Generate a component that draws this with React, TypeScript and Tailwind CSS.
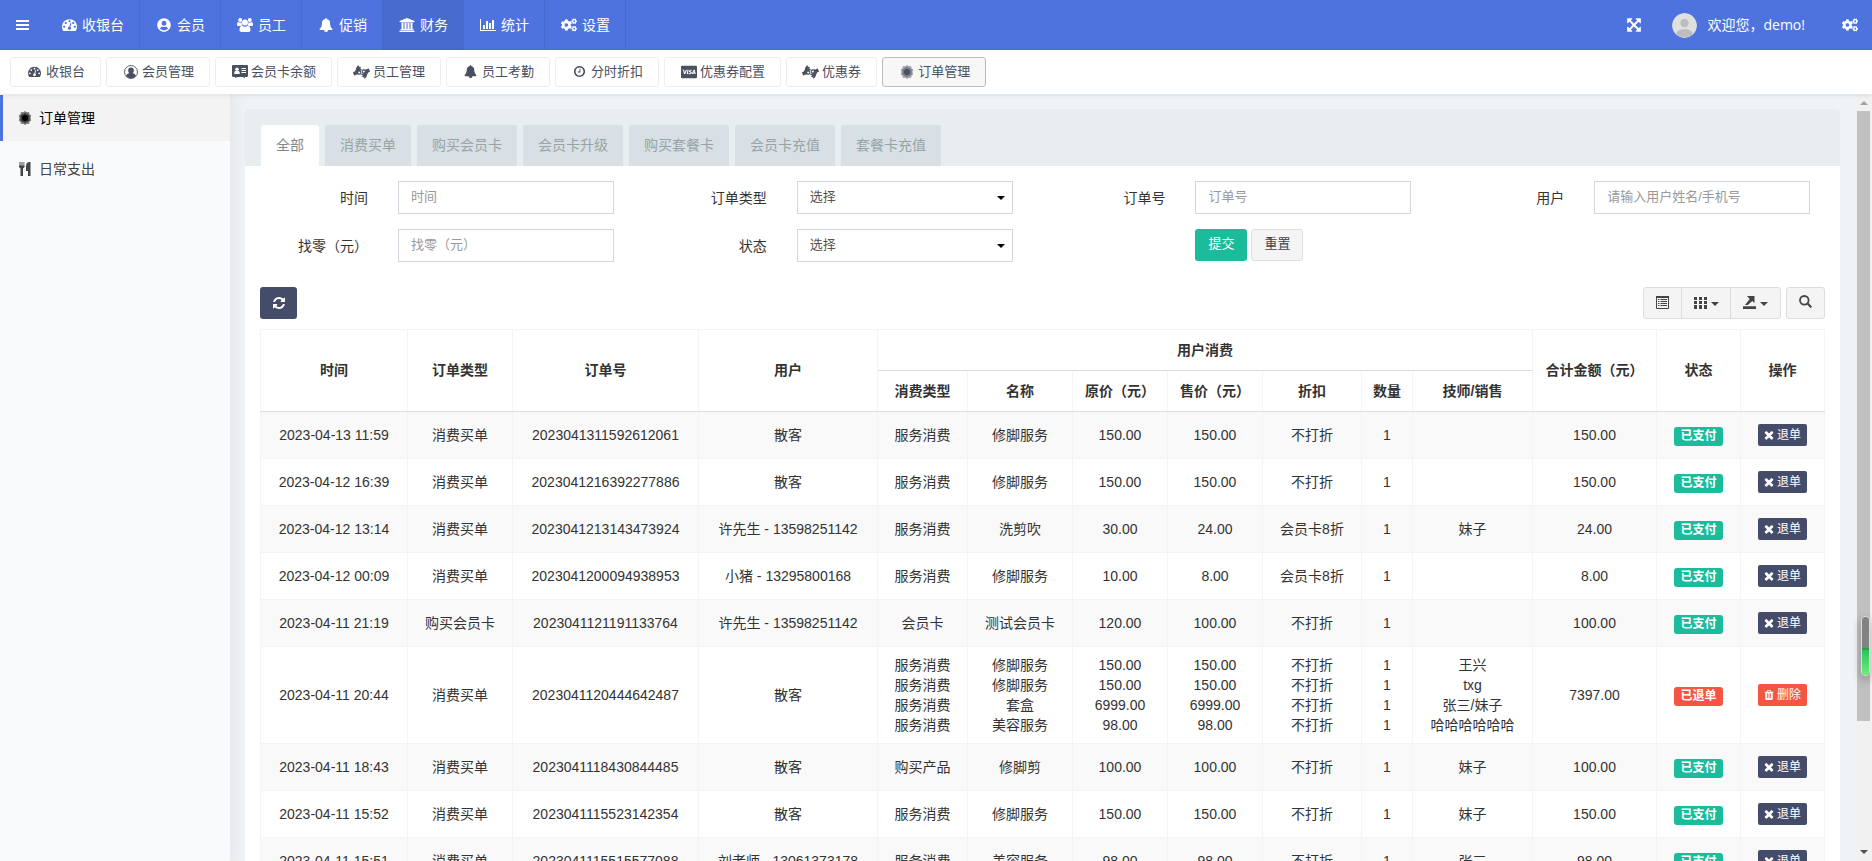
import type { ReactNode } from "react";
import { FaAmericanSignLanguageInterpreting, FaCogs, FaUserCircle, FaCcVisa } from "react-icons/fa";

type TIcon = { className?: string };

const Glyph = ({ d, box = "0 0 1792 1792", className = "h-[1em] w-[1em]" }: TIcon & { d: string; box?: string }) => (
  <svg viewBox={box} fill="currentColor" className={className} aria-hidden="true">
    <path d={d} />
  </svg>
);

const PATHS = {
  dashboard:
    "M384 1152q0-53-37.5-90.5t-90.5-37.5-90.5 37.5-37.5 90.5 37.5 90.5 90.5 37.5 90.5-37.5 37.5-90.5zm192-448q0-53-37.5-90.5t-90.5-37.5-90.5 37.5-37.5 90.5 37.5 90.5 90.5 37.5 90.5-37.5 37.5-90.5zm428 481l101-382q6-26-7.5-48.5t-38.5-29.5-48 6.5-30 39.5l-101 382q-60 5-107 43.5t-63 98.5q-20 77 20 146t117 89 146-20 89-117q16-60-6-117t-72-91zm660-33q0-53-37.5-90.5t-90.5-37.5-90.5 37.5-37.5 90.5 37.5 90.5 90.5 37.5 90.5-37.5 37.5-90.5zm-640-640q0-53-37.5-90.5t-90.5-37.5-90.5 37.5-37.5 90.5 37.5 90.5 90.5 37.5 90.5-37.5 37.5-90.5zm448 192q0-53-37.5-90.5t-90.5-37.5-90.5 37.5-37.5 90.5 37.5 90.5 90.5 37.5 90.5-37.5 37.5-90.5zm320 448q0 261-141 483-19 29-54 29h-1402q-35 0-54-29-141-221-141-483 0-182 71-348t191-286 286-191 348-71 348 71 286 191 191 286 71 348z",
  bell: "M912 1696q0-16-16-16-59 0-101.5-42.5t-42.5-101.5q0-16-16-16t-16 16q0 73 51.5 124.5t124.5 51.5q16 0 16-16zm816-288q0 52-38 90t-90 38h-448q0 106-75 181t-181 75-181-75-75-181h-448q-52 0-90-38t-38-90q50-42 91-88t85-119.5 74.5-158.5 50-206 19.5-260q0-152 117-282.5t307-158.5q-8-19-8-39 0-40 28-68t68-28 68 28 28 68q0 20-8 39 190 28 307 158.5t117 282.5q0 139 19.5 260t50 206 74.5 158.5 85 119.5 91 88z",
  bank: "M960 0l960 384v128h-128q0 26-20.5 45t-48.5 19h-1526q-28 0-48.5-19t-20.5-45h-128v-128zm-704 640h256v768h128v-768h256v768h128v-768h256v768h128v-768h256v768h59q28 0 48.5 19t20.5 45v64h-1664v-64q0-26 20.5-45t48.5-19h59v-768zm1595 960q28 0 48.5 19t20.5 45v128h-1920v-128q0-26 20.5-45t48.5-19h1782z",
  refresh:
    "M1639 1056q0 5-1 7-64 268-268 434.5t-478 166.5q-146 0-282.5-55t-243.5-157l-129 129q-19 19-45 19t-45-19-19-45v-448q0-26 19-45t45-19h448q26 0 45 19t19 45-19 45l-137 137q71 66 161 102t187 36q134 0 250-65t186-179q11-17 53-117 8-23 30-23h192q13 0 22.5 9.5t9.5 22.5zm25-800v448q0 26-19 45t-45 19h-448q-26 0-45-19t-19-45 19-45l138-138q-148-137-349-137-134 0-250 65t-186 179q-11 17-53 117-8 23-30 23h-199q-13 0-22.5-9.5t-9.5-22.5v-7q65-268 270-434.5t480-166.5q146 0 284 55.5t245 156.5l130-129q19-19 45-19t45 19 19 45z",
  times:
    "M1490 1322q0 40-28 68l-136 136q-28 28-68 28t-68-28l-294-294-294 294q-28 28-68 28t-68-28l-136-136q-28-28-28-68t28-68l294-294-294-294q-28-28-28-68t28-68l136-136q28-28 68-28t68 28l294 294 294-294q28-28 68-28t68 28l136 136q28 28 28 68t-28 68l-294 294 294 294q28 28 28 68z",
  chart:
    "M640 896v512h-256v-512h256zm384-512v1024h-256v-1024h256zm1024 1152v128h-2048v-1536h128v1408h1920zm-640-896v768h-256v-768h256zm384-384v1152h-256v-1152h256z",
  clock:
    "M1024 544v448q0 14-9 23t-23 9h-320q-14 0-23-9t-9-23v-64q0-14 9-23t23-9h224v-352q0-14 9-23t23-9h64q14 0 23 9t9 23zm416 352q0-148-73-273t-198-198-273-73-273 73-198 198-73 273 73 273 198 198 273 73 273-73 198-198 73-273zm224 0q0 209-103 385.5t-279.5 279.5-385.5 103-385.5-103-279.5-279.5-103-385.5 103-385.5 279.5-279.5 385.5-103 385.5 103 279.5 279.5 103 385.5z",
  trash:
    "M704 1376v-704q0-14-9-23t-23-9h-64q-14 0-23 9t-9 23v704q0 14 9 23t23 9h64q14 0 23-9t9-23zm256 0v-704q0-14-9-23t-23-9h-64q-14 0-23 9t-9 23v704q0 14 9 23t23 9h64q14 0 23-9t9-23zm256 0v-704q0-14-9-23t-23-9h-64q-14 0-23 9t-9 23v704q0 14 9 23t23 9h64q14 0 23-9t9-23zm-544-992h448l-48-117q-7-9-17-11h-317q-10 2-17 11zm928 32v64q0 14-9 23t-23 9h-96v948q0 83-47 143.5t-113 60.5h-832q-66 0-113-58.5t-47-141.5v-952h-96q-14 0-23-9t-9-23v-64q0-14 9-23t23-9h309l70-167q15-37 54-63t79-26h320q40 0 79 26t54 63l70 167h309q14 0 23 9t9 23z",
  expand:
    "M1411 541l-355 355 355 355 144-144q29-31 70-14 39 17 39 59v448q0 26-19 45t-45 19h-448q-42 0-59-40-17-39 14-69l144-144-355-355-355 355 144 144q31 30 14 69-17 40-59 40h-448q-26 0-45-19t-19-45v-448q0-42 40-59 39-17 69 14l144 144 355-355-355-355-144 144q-19 19-45 19-12 0-24-5-40-17-40-59v-448q0-26 19-45t45-19h448q42 0 59 40 17 39-14 69l-144 144 355 355 355-355-144-144q-31-30-14-69 17-40 59-40h448q26 0 45 19t19 45v448q0 42-39 59-13 5-25 5-26 0-45-19z",
};

const Group = () => (
  <svg viewBox="0 0 16 14" className="h-[14px] w-4" fill="currentColor" aria-hidden="true">
    <circle cx="3.200" cy="2" r="2" />
    <circle cx="12.800" cy="2" r="2" />
    <circle cx="8" cy="4.500" r="3" />
    <path d="M1 4c1.300.8 2.600.8 3.600.3 0 1.300.3 2.300 1 3.100-.9 0-1.600.2-2.100.6H1.400C.5 8 0 7.600 0 6.700 0 5.400.3 4.300 1 4zM15 4c-1.300.8-2.600.8-3.600.3 0 1.300-.3 2.300-1 3.100.9 0 1.600.2 2.100.6h2.100c.9 0 1.400-.4 1.400-1.300 0-1.300-.3-2.400-1-2.700zM5.200 7.700c1.800 1.300 3.800 1.300 5.600 0 1.900 0 2.700 2.200 2.700 4.300 0 1.300-.8 2-2 2h-7c-1.200 0-2-.7-2-2 0-2.100.8-4.300 2.700-4.300z" />
  </svg>
);

const UserRing = () => (
  <svg viewBox="0 0 16 16" className="h-[14px] w-[14px]" aria-hidden="true">
    <circle cx="8" cy="8" r="7.400" fill="none" stroke="currentColor" strokeWidth="1" />
    <path fill="currentColor" d="M8 2.800a3.200 3.200 0 0 1 3.200 3.400c0 1.500-.7 2.800-1.500 3.300 2 .3 3.500 1.300 3.900 3A7.300 7.300 0 0 1 8 15.300a7.300 7.300 0 0 1-5.600-2.800c.4-1.700 1.900-2.700 3.900-3-.8-.5-1.500-1.800-1.500-3.300A3.200 3.200 0 0 1 8 2.800z" />
  </svg>
);

const Vcard = () => (
  <svg viewBox="0 0 16 13" className="h-[13px] w-4" aria-hidden="true">
    <path fill="currentColor" d="M1.200 0h13.600c.7 0 1.200.5 1.200 1.200v9.600c0 .7-.5 1.200-1.200 1.200H13v.8h-1.500V12h-7v.8H3V12H1.200C.5 12 0 11.500 0 10.800V1.200C0 .5.500 0 1.200 0z" />
    <circle cx="5" cy="4.200" r="1.700" fill="#fff" />
    <path fill="#fff" d="M2.200 9c0-2 .6-3.100 1.500-3.300.8.600 1.800.6 2.600 0C7.200 5.900 7.800 7 7.800 9z" />
    <path d="M9.500 3.500H14M9.500 5.500H14M9.500 7.500H14" stroke="#fff" />
  </svg>
);

const Hands = () => <FaAmericanSignLanguageInterpreting className="h-[14px] w-[17px]" />;

// six-petal rosette
const Rosette = () => (
  <svg viewBox="0 0 14 14" className="h-[14px] w-[14px]" fill="currentColor" aria-hidden="true">
    <path opacity=".5" d="m7 0 1.800 1.200 2.200-.2.500 2.200 1.700 1.300-.7 2.500.7 2.500-1.700 1.300L11 13l-2.200-.2L7 14l-1.800-1.200L3 13l-.5-2.200L.8 9.500 1.500 7 .8 4.500l1.700-1.300L3 1l2.200.2z" />
    <path opacity=".5" d="M7 1.800 11.500 4.400v5.200L7 12.200 2.500 9.600V4.400z" />
    <circle cx="7" cy="7" r="3" />
  </svg>
);

const Cutlery = () => (
  <svg viewBox="0 0 12 14" className="h-[14px] w-[14px]" fill="currentColor" aria-hidden="true">
    <path opacity=".5" d="M0 0h5.500v5H0z" />
    <path d="M0 3.500h5.500V5L4 6.500V14H1.500V6.500L0 5zM11.500 0v14H9V9H7V4c0-2.500 1.500-4 3.500-4z" />
  </svg>
);

const Caret = () => <span className="mt-1 ml-1 border-x-4 border-t-4 border-x-transparent border-t-[#444]" />;

const NAV: { label: string; icon: ReactNode; active?: boolean }[] = [
  { label: "收银台", icon: <Glyph d={PATHS.dashboard} className="h-[15px] w-[15px]" /> },
  { label: "会员", icon: <FaUserCircle /> },
  { label: "员工", icon: <Group /> },
  { label: "促销", icon: <Glyph d={PATHS.bell} /> },
  { label: "财务", icon: <Glyph d={PATHS.bank} box="0 0 1920 1792" className="h-[14px] w-4" />, active: true },
  { label: "统计", icon: <Glyph d={PATHS.chart} box="0 0 2048 1792" className="h-[14px] w-4" /> },
  { label: "设置", icon: <FaCogs className="h-4 w-4" /> },
];

const TABS: { label: string; icon: ReactNode; active?: boolean }[] = [
  { label: "收银台", icon: <Glyph d={PATHS.dashboard} className="h-[13px] w-[13px]" /> },
  { label: "会员管理", icon: <UserRing /> },
  { label: "会员卡余额", icon: <Vcard /> },
  { label: "员工管理", icon: <Hands /> },
  { label: "员工考勤", icon: <Glyph d={PATHS.bell} /> },
  { label: "分时折扣", icon: <Glyph d={PATHS.clock} /> },
  { label: "优惠券配置", icon: <FaCcVisa className="h-4 w-4" /> },
  { label: "优惠券", icon: <Hands /> },
  { label: "订单管理", icon: <Rosette />, active: true },
];

const TYPES = ["全部", "消费买单", "购买会员卡", "会员卡升级", "购买套餐卡", "会员卡充值", "套餐卡充值"];

type TItem = [string, string, string, string, string, string];
type TOrder = {
  time: string;
  type: string;
  no: string;
  user: string;
  items: TItem[];
  total: string;
  refunded?: boolean;
};

const ORDERS: TOrder[] = [
  { time: "2023-04-13 11:59", type: "消费买单", no: "2023041311592612061", user: "散客", items: [["服务消费", "修脚服务", "150.00", "150.00", "不打折", ""]], total: "150.00" },
  { time: "2023-04-12 16:39", type: "消费买单", no: "2023041216392277886", user: "散客", items: [["服务消费", "修脚服务", "150.00", "150.00", "不打折", ""]], total: "150.00" },
  { time: "2023-04-12 13:14", type: "消费买单", no: "2023041213143473924", user: "许先生 - 13598251142", items: [["服务消费", "洗剪吹", "30.00", "24.00", "会员卡8折", "妹子"]], total: "24.00" },
  { time: "2023-04-12 00:09", type: "消费买单", no: "2023041200094938953", user: "小猪 - 13295800168", items: [["服务消费", "修脚服务", "10.00", "8.00", "会员卡8折", ""]], total: "8.00" },
  { time: "2023-04-11 21:19", type: "购买会员卡", no: "2023041121191133764", user: "许先生 - 13598251142", items: [["会员卡", "测试会员卡", "120.00", "100.00", "不打折", ""]], total: "100.00" },
  {
    time: "2023-04-11 20:44",
    type: "消费买单",
    no: "2023041120444642487",
    user: "散客",
    items: [
      ["服务消费", "修脚服务", "150.00", "150.00", "不打折", "王兴"],
      ["服务消费", "修脚服务", "150.00", "150.00", "不打折", "txg"],
      ["服务消费", "套盒", "6999.00", "6999.00", "不打折", "张三/妹子"],
      ["服务消费", "美容服务", "98.00", "98.00", "不打折", "哈哈哈哈哈哈"],
    ],
    total: "7397.00",
    refunded: true,
  },
  { time: "2023-04-11 18:43", type: "消费买单", no: "2023041118430844485", user: "散客", items: [["购买产品", "修脚剪", "100.00", "100.00", "不打折", "妹子"]], total: "100.00" },
  { time: "2023-04-11 15:52", type: "消费买单", no: "2023041115523142354", user: "散客", items: [["服务消费", "修脚服务", "150.00", "150.00", "不打折", "妹子"]], total: "150.00" },
  { time: "2023-04-11 15:51", type: "消费买单", no: "2023041115515577088", user: "刘老师 - 13061373178", items: [["服务消费", "美容服务", "98.00", "98.00", "不打折", "张三"]], total: "98.00" },
];

const TopBar = () => (
  <header className="flex h-[50px] shrink-0 items-stretch justify-between bg-[#4e73df] font-['Open_Sans','Noto_Sans_CJK_SC',sans-serif] text-sm text-white">
    <div className="flex">
      <button type="button" aria-label="菜单" className="flex w-[45px] items-center pl-4">
        <span className="flex w-[13px] flex-col gap-[2px]">
          <span className="h-[2px] bg-white" />
          <span className="h-[2px] bg-white" />
          <span className="h-[2px] bg-white" />
        </span>
      </button>
      <nav className="flex">
        {NAV.map((item) => (
          <a
            key={item.label}
            href="#"
            className={`flex items-center gap-1 border-r border-[#476acf] px-[15px] pb-px ${item.active ? "bg-[#486bd0]" : ""}`}
          >
            <span className="flex w-[18px] justify-center">{item.icon}</span>
            {item.label}
          </a>
        ))}
      </nav>
    </div>
    <div className="flex items-center">
      <button type="button" aria-label="全屏" className="px-[15px]">
        <Glyph d={PATHS.expand} className="h-4 w-4" />
      </button>
      <a href="#" className="flex items-center gap-[10px] px-[15px]">
        <svg viewBox="0 0 25 25" className="h-[25px] w-[25px] rounded-full" aria-hidden="true">
          <circle cx="12.500" cy="12.500" r="12.500" fill="#e0e0e0" />
          <circle cx="12.500" cy="10" r="4.200" fill="#bdbdbd" />
          <path d="M4 21c1-3.500 4.500-4.800 8.500-4.800S20 17.500 21 21a12.500 12.500 0 0 1-17 0z" fill="#bdbdbd" />
        </svg>
        <span>欢迎您，demo!</span>
      </a>
      <button type="button" aria-label="设置" className="py-4 pr-[14px] pl-[22px]">
        <FaCogs className="h-4 w-4" />
      </button>
    </div>
  </header>
);

const PageTabs = () => (
  <nav className="z-10 flex h-11 shrink-0 items-center gap-[5px] bg-white px-[10px] shadow-[0_1px_5px_rgba(0,21,41,0.1)]">
    {TABS.map((tab) => (
      <a
        key={tab.label}
        href="#"
        className={`flex h-[30px] items-center gap-[3px] rounded-[3px] border px-[15px] pb-px text-[13px] text-[#495060] ${
          tab.active ? "border-[#bbb] bg-[#f7f7f7]" : "border-[#eee] bg-white"
        }`}
      >
        <span className="flex w-[17px] justify-center">{tab.icon}</span>
        {tab.label}
      </a>
    ))}
  </nav>
);

const SideBar = () => (
  <aside className="z-[5] flex w-[230px] shrink-0 flex-col gap-[5px] bg-[#f9fafc] pt-px text-sm shadow-[2px_0_16px_rgba(0,21,41,0.08)]">
    <a href="#" className="flex h-[46px] items-center gap-[7px] border-l-[3px] border-[#4e73df] bg-[#f3f3f3] pl-[15px] text-black">
      <Rosette />
      订单管理
    </a>
    <a href="#" className="flex h-[46px] items-center gap-[7px] border-l-[3px] border-transparent pl-[15px] text-[#444]">
      <Cutlery />
      日常支出
    </a>
  </aside>
);

const Field = ({ id, label, children }: { id?: string; label?: string; children: ReactNode }) => (
  <div className="flex px-[15px]">
    <label htmlFor={id} className="w-1/3 shrink-0 pt-[7px] pr-[15px] text-right text-sm">
      {label}
    </label>
    <div className="min-w-0 grow px-[15px]">{children}</div>
  </div>
);

const inputCls =
  "h-[33px] w-full border border-[#d2d6de] bg-white px-3 pb-[2px] text-[13px] text-[#555] outline-none placeholder:text-[#999]";

const SelectBox = ({ id }: { id: string }) => (
  <div className="relative">
    <select id={id} className={`${inputCls} appearance-none`}>
      <option>选择</option>
    </select>
    <span className="pointer-events-none absolute top-[15px] right-2 border-x-4 border-t-4 border-x-transparent border-t-black" />
  </div>
);

const SearchForm = () => (
  <form className="grid grid-cols-4 gap-y-[15px] pt-[15px]">
    <Field id="time" label="时间">
      <input id="time" className={inputCls} placeholder="时间" />
    </Field>
    <Field id="type" label="订单类型">
      <SelectBox id="type" />
    </Field>
    <Field id="no" label="订单号">
      <input id="no" className={inputCls} placeholder="订单号" />
    </Field>
    <Field id="user" label="用户">
      <input id="user" className={inputCls} placeholder="请输入用户姓名/手机号" />
    </Field>
    <Field id="change" label="找零（元）">
      <input id="change" className={inputCls} placeholder="找零（元）" />
    </Field>
    <Field id="status" label="状态">
      <SelectBox id="status" />
    </Field>
    <Field>
      <div className="flex gap-1 text-[13px]">
        <button type="submit" className="h-8 w-[52px] rounded-[3px] bg-[#1abc9c] pb-[2px] text-white">
          提交
        </button>
        <button type="reset" className="h-8 w-[52px] rounded-[3px] border border-[#ddd] bg-[#f4f4f4] pb-[2px] text-[#444]">
          重置
        </button>
      </div>
    </Field>
  </form>
);

const Toolbar = () => (
  <div className="flex items-center justify-between px-[15px] pt-[25px] pb-[10px]">
    <button type="button" aria-label="刷新" className="flex h-8 w-[37px] items-center justify-center rounded-[3px] bg-[#444c69] pb-px text-white">
      <Glyph d={PATHS.refresh} className="h-[14px] w-[14px]" />
    </button>
    <div className="flex gap-[5px] text-[#444]">
      <div className="flex h-8 divide-x divide-[#ddd] rounded-[3px] border border-[#ddd] bg-[#f4f4f4]">
        <button type="button" aria-label="切换" className="flex w-[38px] items-center justify-center pb-[2px]">
          <svg viewBox="0 0 13 13" className="h-[13px] w-[13px]" aria-hidden="true">
            <path d="M.5.5h12v12H.5z" fill="none" stroke="currentColor" />
            <path d="M0 0h13v2H0z" fill="currentColor" />
            <path d="M2 3.500h1.500M4.500 3.500H11M2 5.500h1.500M4.500 5.500H11M2 7.500h1.500M4.500 7.500H11M2 9.500h1.500M4.500 9.500H11" stroke="currentColor" />
          </svg>
        </button>
        <button type="button" aria-label="列" className="flex w-[49px] items-center justify-center pb-[2px]">
          <svg viewBox="0 0 13 13" className="h-[13px] w-[13px]" fill="currentColor" aria-hidden="true">
            <path d="M0 1h3v3H0zM5 1h3v3H5zM10 1h3v3h-3zM0 5h3v3H0zM5 5h3v3H5zM10 5h3v3h-3zM0 9h3v4H0zM5 9h3v4H5zM10 9h3v4h-3z" />
          </svg>
          <Caret />
        </button>
        <button type="button" aria-label="导出" className="flex w-[49px] items-center justify-center pb-[2px]">
          <svg viewBox="0 0 13 13" className="h-[13px] w-[13px]" fill="currentColor" aria-hidden="true">
            <path d="M0 10.200h13V13H0zM4 0h7.500v7L9.300 4.900 4.800 9H2l4.700-5.900z" />
          </svg>
          <Caret />
        </button>
      </div>
      <button type="button" aria-label="搜索" className="flex h-8 w-[39px] items-center justify-center rounded-[3px] border border-[#ddd] bg-[#f4f4f4] pb-[3px]">
        <svg viewBox="0 0 13 13" className="h-[13px] w-[13px]" fill="none" stroke="currentColor" aria-hidden="true">
          <circle cx="5.300" cy="5.300" r="4.300" strokeWidth="1.800" />
          <path d="m8.300 8.300 4 4" strokeWidth="2.200" />
        </svg>
      </button>
    </div>
  </div>
);

const COLS = [
  "w-[147px]",
  "w-[105px]",
  "w-[186px]",
  "w-[179px]",
  "w-[90px]",
  "w-[105px]",
  "w-[95px]",
  "w-[95px]",
  "w-[99px]",
  "w-[51px]",
  "w-[120px]",
  "w-[124px]",
  "w-[84px]",
  "w-[84px]",
];

const Th = ({ children, ...rest }: { children: ReactNode; rowSpan?: number; colSpan?: number }) => (
  <th {...rest} className="h-[41px] border border-[#f4f4f4] border-b-[#ddd] pb-px font-bold">
    {children}
  </th>
);

const Td = ({ children }: { children?: ReactNode }) => (
  <td className="border border-[#f4f4f4] py-2 align-middle">{children}</td>
);

const Lines = ({ items, index }: { items: TItem[]; index: number }) => (
  <Td>
    {items.map((item, i) => (
      <div key={i}>{item[index]}</div>
    ))}
  </Td>
);

const OrderTable = () => (
  <div className="px-[15px]">
    <table className="w-full table-fixed border-collapse text-center text-sm leading-5 whitespace-nowrap text-[#333]">
      <colgroup>
        {COLS.map((w, i) => (
          <col key={i} className={w} />
        ))}
      </colgroup>
      <thead>
        <tr>
          <Th rowSpan={2}>时间</Th>
          <Th rowSpan={2}>订单类型</Th>
          <Th rowSpan={2}>订单号</Th>
          <Th rowSpan={2}>用户</Th>
          <Th colSpan={7}>用户消费</Th>
          <Th rowSpan={2}>合计金额（元）</Th>
          <Th rowSpan={2}>状态</Th>
          <Th rowSpan={2}>操作</Th>
        </tr>
        <tr>
          <Th>消费类型</Th>
          <Th>名称</Th>
          <Th>原价（元）</Th>
          <Th>售价（元）</Th>
          <Th>折扣</Th>
          <Th>数量</Th>
          <Th>技师/销售</Th>
        </tr>
      </thead>
      <tbody>
        {ORDERS.map((order) => (
          <tr key={order.no} className="h-[47px] odd:bg-[#f9f9f9]">
            <Td>{order.time}</Td>
            <Td>{order.type}</Td>
            <Td>{order.no}</Td>
            <Td>{order.user}</Td>
            <Lines items={order.items} index={0} />
            <Lines items={order.items} index={1} />
            <Lines items={order.items} index={2} />
            <Lines items={order.items} index={3} />
            <Lines items={order.items} index={4} />
            <Td>
              {order.items.map((_, i) => (
                <div key={i}>1</div>
              ))}
            </Td>
            <Lines items={order.items} index={5} />
            <Td>{order.total}</Td>
            <Td>
              <div className="flex justify-center pt-[3px]">
                <span
                  className={`flex h-[19px] w-[49px] items-center justify-center rounded-[3px] pb-px text-xs font-bold text-white ${
                    order.refunded ? "bg-[#f75444]" : "bg-[#1abc9c]"
                  }`}
                >
                  {order.refunded ? "已退单" : "已支付"}
                </span>
              </div>
            </Td>
            <Td>
              <div className="flex justify-center">
                <button
                  type="button"
                  className={`flex h-[22px] w-[49px] items-center justify-center gap-[3px] rounded-[2px] pb-px text-xs text-white ${
                    order.refunded ? "bg-[#f75444]" : "bg-[#444c69]"
                  }`}
                >
                  <Glyph
                    d={order.refunded ? PATHS.trash : PATHS.times}
                    box={order.refunded ? "128 128 1536 1536" : "206 206 1380 1380"}
                    className="h-[10px] w-[10px]"
                  />
                  {order.refunded ? "删除" : "退单"}
                </button>
              </div>
            </Td>
          </tr>
        ))}
      </tbody>
    </table>
  </div>
);

const ScrollRail = () => (
  <div className="relative flex w-[17px] shrink-0 flex-col items-center bg-[#f1f1f1]">
    <span className="mt-[7px] border-x-4 border-b-4 border-x-transparent border-b-[#a3a3a3]" />
    <span className="mt-[6px] h-[610px] w-[13px] bg-[#c1c1c1]" />
    <span className="mt-auto mb-[7px] border-x-4 border-t-4 border-x-transparent border-t-[#505050]" />
    <span className="absolute top-[522px] right-[2px] flex h-[60px] w-[9px] flex-col overflow-hidden rounded-[4px] border border-[#ddd] bg-[#828282] shadow-[0_4px_10px_rgba(0,0,0,0.3)]">
      <span className="mt-auto h-[27px] border-t-2 border-[#28a050] bg-gradient-to-b from-[#22c55e] to-[#6cf07a]" />
    </span>
  </div>
);

const App = () => (
  <div className="flex h-screen flex-col overflow-hidden bg-[#eff3f6] font-['Liberation_Sans','Noto_Sans_CJK_SC',sans-serif] text-[#333]">
    <TopBar />
    <PageTabs />
    <div className="flex min-h-0 grow">
      <SideBar />
      <main className="min-w-0 grow overflow-hidden p-[15px]">
        <section className="rounded-[3px] bg-white pb-[15px]">
          <div className="flex gap-[6px] rounded-t-[3px] bg-[#e8edf0] px-4 pt-4">
            {TYPES.map((type, i) => (
              <button
                key={type}
                type="button"
                className={`h-[41px] rounded-t-[3px] px-[15px] pb-[2px] text-sm ${
                  i === 0 ? "bg-white text-[#7b8a8b]" : "bg-[#d8dfe5] text-[#95a5a6]"
                }`}
              >
                {type}
              </button>
            ))}
          </div>
          <SearchForm />
          <Toolbar />
          <OrderTable />
        </section>
      </main>
      <ScrollRail />
    </div>
  </div>
);

export default App;
